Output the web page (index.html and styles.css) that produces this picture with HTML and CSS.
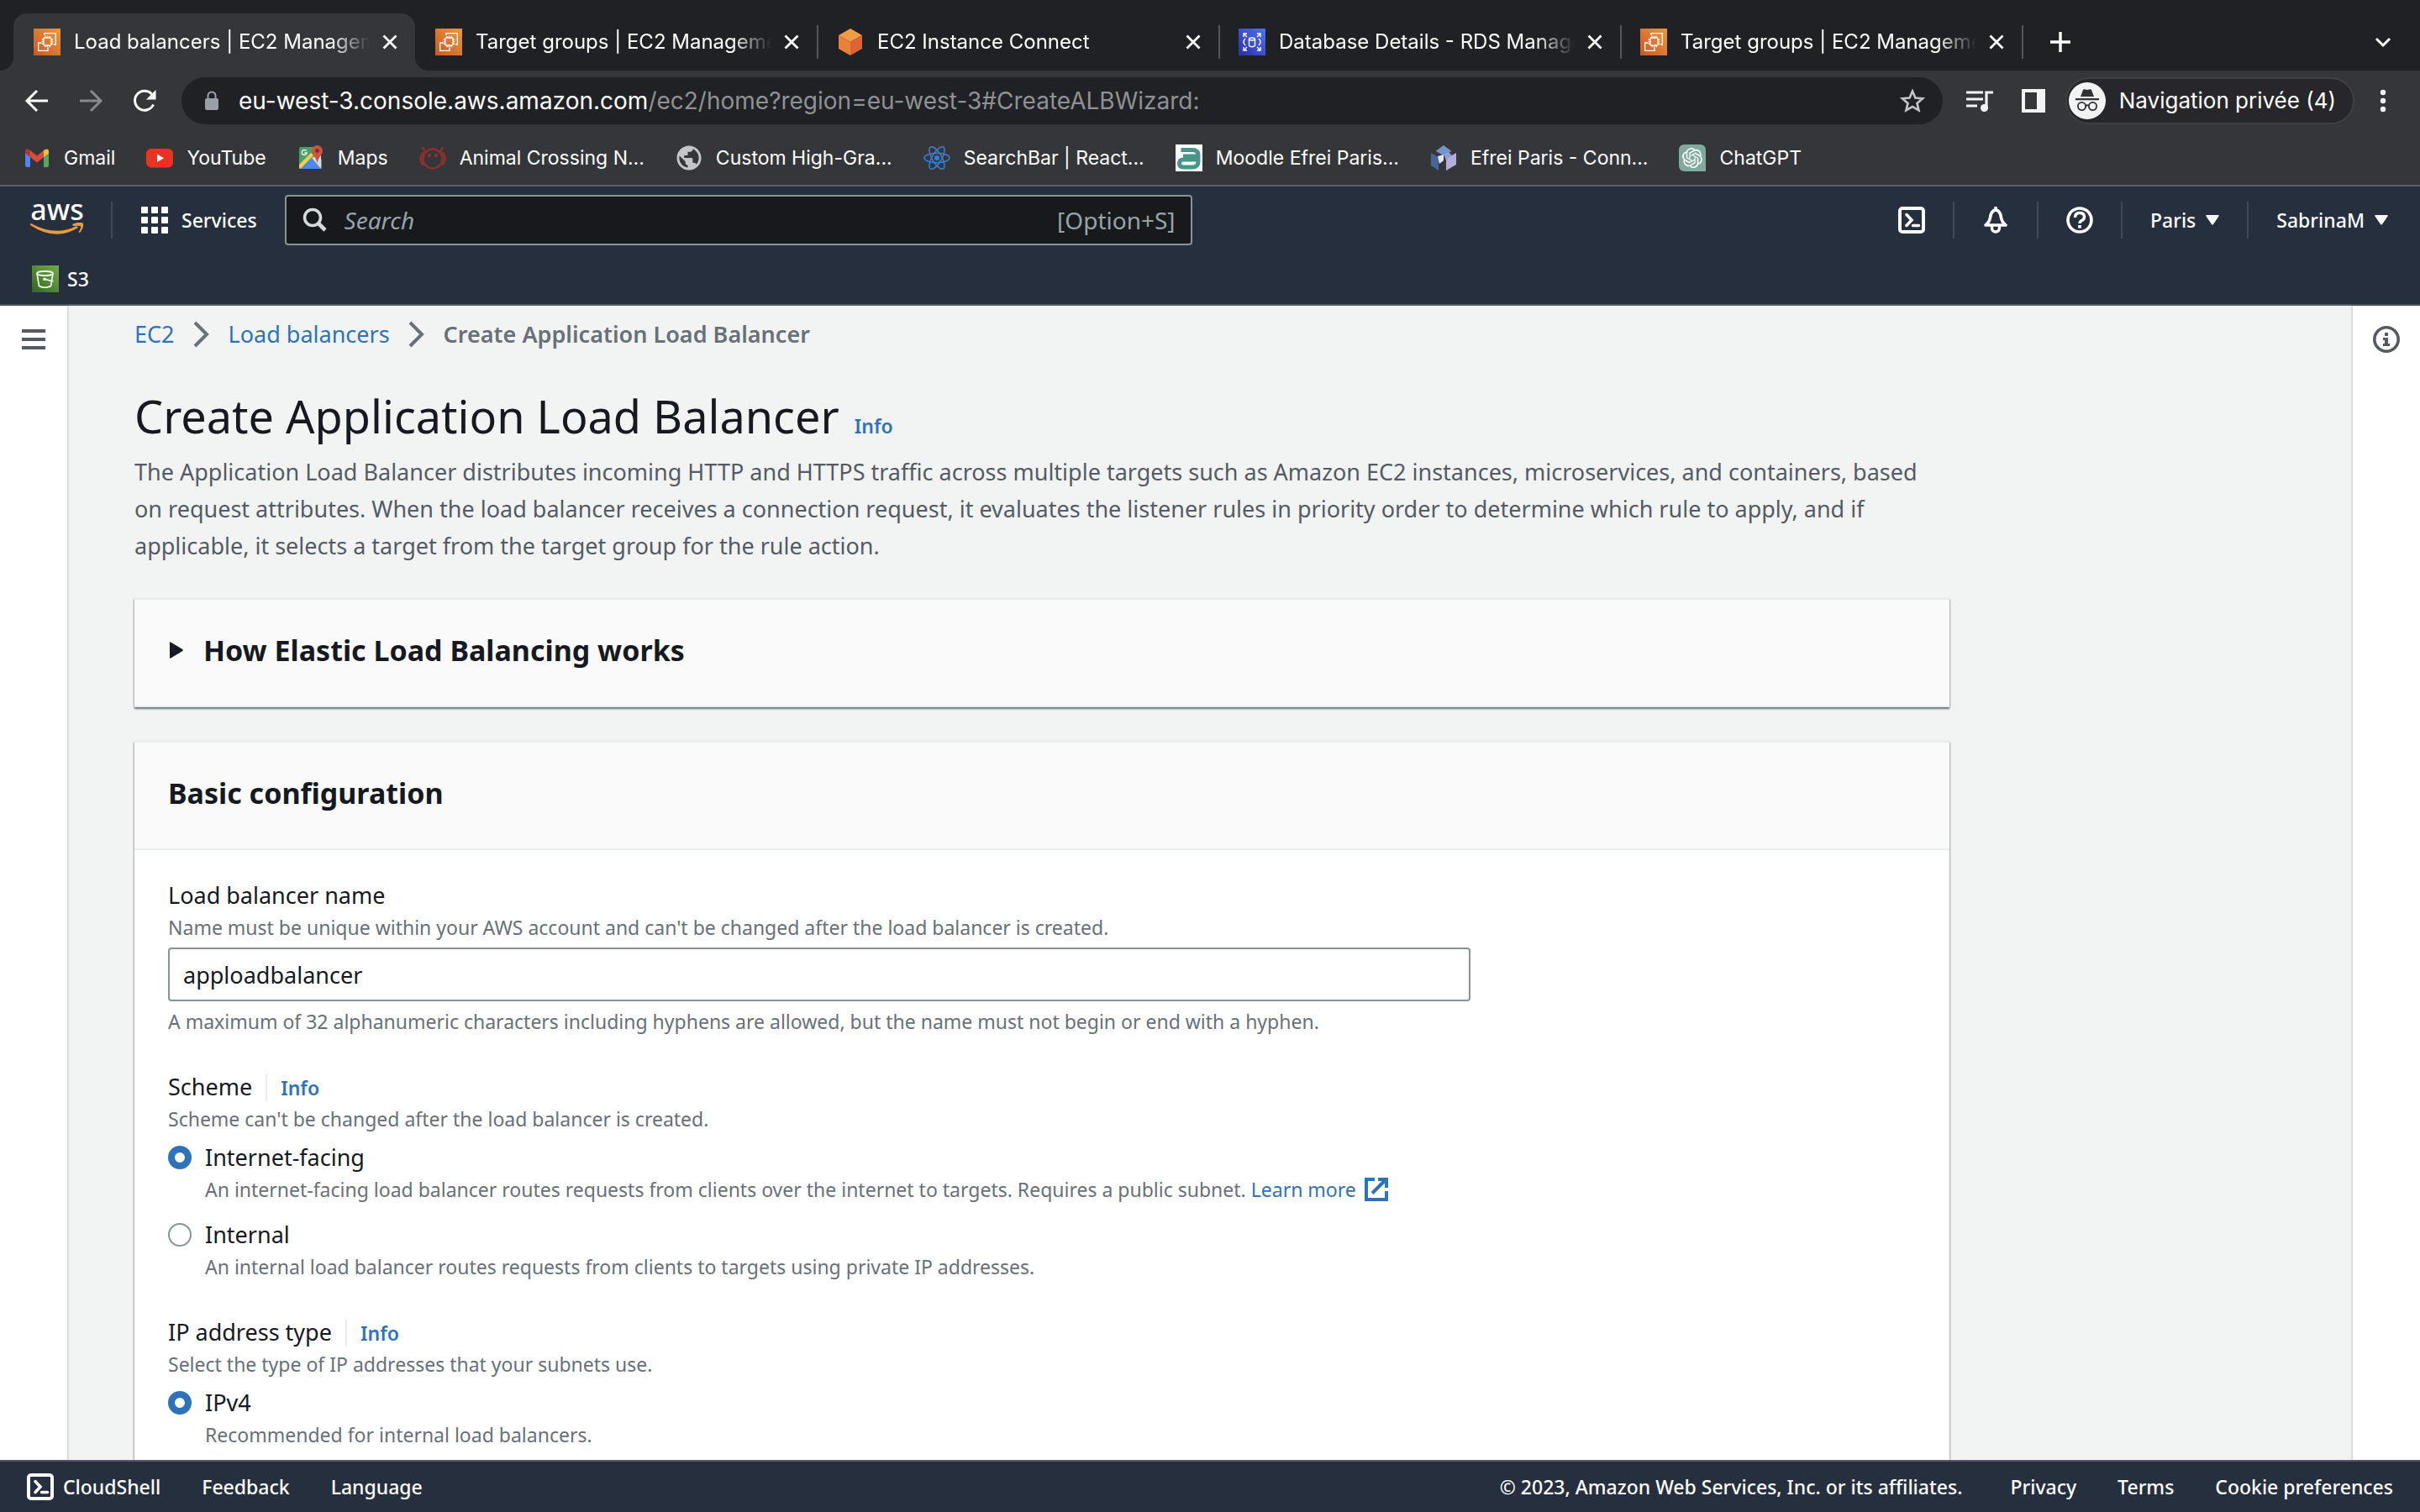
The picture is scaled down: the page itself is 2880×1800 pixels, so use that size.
FILE: index.html
```html
<!DOCTYPE html>
<html lang="en">
<head>
<meta charset="utf-8">
<title>Load balancers | EC2 Management Console</title>
<link rel="stylesheet" href="styles.css">
</head>
<body>
<svg class="sprite" aria-hidden="true">
  <defs>
    <linearGradient id="orange" x1="0" y1="1" x2="1" y2="0"><stop offset="0" stop-color="#c45a2b"/><stop offset="1" stop-color="#f0983a"/></linearGradient>
    <linearGradient id="blue" x1="0" y1="1" x2="1" y2="0"><stop offset="0" stop-color="#2b30a8"/><stop offset="1" stop-color="#4f72f3"/></linearGradient>
    <linearGradient id="green" x1="0" y1="1" x2="1" y2="0"><stop offset="0" stop-color="#32661f"/><stop offset="1" stop-color="#74ad4c"/></linearGradient>
  </defs>
  <symbol id="ec2" viewBox="0 0 32 32">
    <rect width="32" height="32" fill="url(#orange)"/>
    <g fill="none" stroke="#fff" stroke-width="1.3">
      <path d="M13 8V5.700h13.300V19H24M9.500 17H5.700v9.300H17V22.500"/>
      <rect x="12" y="11" width="9" height="9" rx="1"/>
      <path d="M14 8.800V11M16.500 8.800V11M19 8.800V11M14 20v2.200M16.500 20v2.200M19 20v2.200M9.800 13H12M9.800 15.500H12M9.800 18H12M21 13h2.200M21 15.500h2.200M21 18h2.200"/>
    </g>
  </symbol>
  <symbol id="cube" viewBox="0 0 32 32">
    <path fill="#f09c45" d="M16 0l14 8-14 8L2 8z"/><path fill="#e98138" d="M2 8l14 8v16L2 24z"/><path fill="#dc6435" d="M30 8l-14 8v16l14-8z"/>
  </symbol>
  <symbol id="rds" viewBox="0 0 32 32">
    <rect width="32" height="32" fill="url(#blue)"/>
    <g fill="none" stroke="#fff" stroke-width="1.4">
      <path d="M6 10V6h4M6 6l4 4M26 10V6h-4M26 6l-4 4M6 22v4h4M6 26l4-4M26 22v4h-4M26 26l-4-4M8 12q-4 4 0 8M24 12q4 4 0 8"/>
      <ellipse cx="16" cy="12.500" rx="3.500" ry="1.500"/><path d="M12.500 12.500v8q3.500 2.500 7 0v-8"/>
    </g>
  </symbol>
  <symbol id="close" viewBox="0 0 32 32"><path d="M8.500 8.500l15 15M23.500 8.500l-15 15" fill="none" stroke="#fff" stroke-width="2.800"/></symbol>
  <symbol id="shell" viewBox="0 0 32 32">
    <rect x="2" y="2" width="28" height="28" rx="3" fill="none" stroke="#fff" stroke-width="4"/>
    <path d="M10 9.500l6 6.500-6 6.500M17.500 22.500h7" fill="none" stroke="#fff" stroke-width="3.500" stroke-linecap="round"/>
  </symbol>
  <symbol id="caret" viewBox="0 0 16 12"><path d="M1 0h14q1.200.5.500 1.600L9 11q-1 1.200-2 0L.500 1.600Q-.200.500 1 0z" fill="#fff"/></symbol>
  <symbol id="chevron" viewBox="0 0 20 32"><path d="M2 2l14 14L2 30" fill="none" stroke="#687078" stroke-width="4"/></symbol>
</svg>

<header class="browser">
  <div class="tabs" role="tablist">
    <div class="tab active" role="tab"><svg class="icon"><use href="#ec2"/></svg><span class="tab-title">Load balancers | EC2 Management</span><button class="plain" aria-label="Close tab"><svg class="icon"><use href="#close"/></svg></button></div>
    <div class="tab" role="tab"><svg class="icon"><use href="#ec2"/></svg><span class="tab-title">Target groups | EC2 Management</span><button class="plain" aria-label="Close tab"><svg class="icon"><use href="#close"/></svg></button></div>
    <div class="tab divided" role="tab"><svg class="icon"><use href="#cube"/></svg><span class="tab-title">EC2 Instance Connect</span><button class="plain" aria-label="Close tab"><svg class="icon"><use href="#close"/></svg></button></div>
    <div class="tab divided" role="tab"><svg class="icon"><use href="#rds"/></svg><span class="tab-title">Database Details - RDS Management</span><button class="plain" aria-label="Close tab"><svg class="icon"><use href="#close"/></svg></button></div>
    <div class="tab divided" role="tab"><svg class="icon"><use href="#ec2"/></svg><span class="tab-title">Target groups | EC2 Management</span><button class="plain" aria-label="Close tab"><svg class="icon"><use href="#close"/></svg></button></div>
    <button class="plain new-tab divided" aria-label="New tab"><svg class="icon" viewBox="0 0 32 32"><path d="M16 4v24M4 16h24" fill="none" stroke="#fff" stroke-width="3.400"/></svg></button>
    <button class="plain tab-search" aria-label="Search tabs"><svg class="icon" viewBox="0 0 32 32"><path d="M8 12l8 8 8-8" fill="none" stroke="#fff" stroke-width="3"/></svg></button>
  </div>

  <div class="toolbar">
    <button class="plain" aria-label="Back"><svg class="icon" viewBox="0 0 32 32"><path d="M29 16H5M16 4L4 16l12 12" fill="none" stroke="#fff" stroke-width="3"/></svg></button>
    <button class="plain" aria-label="Forward"><svg class="icon" viewBox="0 0 32 32"><path d="M3 16h24M16 4l12 12-12 12" fill="none" stroke="#87888b" stroke-width="3"/></svg></button>
    <button class="plain" aria-label="Reload"><svg class="icon" viewBox="0 0 32 32"><path d="M26.500 20.500A11.500 11.500 0 1 1 24.500 8" fill="none" stroke="#fff" stroke-width="3"/><path d="M29.500 3v11.500H18z" fill="#fff"/></svg></button>
    <div class="omnibox">
      <svg class="icon" viewBox="0 0 32 32"><rect x="8" y="13" width="16" height="14" rx="2" fill="#9aa0a6"/><path d="M11.500 14v-4a4.500 4.500 0 0 1 9 0v4" fill="none" stroke="#9aa0a6" stroke-width="2"/></svg>
      <div class="url" role="textbox" aria-label="Address"><span class="host">eu-west-3.console.aws.amazon.com</span>/ec2/home?region=eu-west-3#CreateALBWizard:</div>
      <button class="plain" aria-label="Bookmark"><svg class="icon" viewBox="0 0 32 32"><path d="M16 4.500l3.400 8 8.600.700-6.500 5.700 2 8.500-7.500-4.500-7.500 4.500 2-8.500L4 13.200l8.600-.700z" fill="none" stroke="#c4c6c9" stroke-width="2.600"/></svg></button>
    </div>
    <div class="toolbar-end">
      <button class="plain" aria-label="Media"><svg class="icon" viewBox="0 0 32 32"><path d="M0 6h20M0 14h20M0 22h13" stroke="#f1f3f4" stroke-width="3"/><path d="M24 26V6h8" fill="none" stroke="#f1f3f4" stroke-width="3.200"/><circle cx="21.500" cy="24.500" r="4.500" fill="#f1f3f4"/></svg></button>
      <button class="plain" aria-label="Side panel"><svg class="icon" viewBox="0 0 32 32"><path fill="#f1f3f4" fill-rule="evenodd" d="M2 2h28v28H2zM6 6v20h14V6z"/></svg></button>
      <button class="plain profile"><svg class="avatar" viewBox="0 0 44 44"><circle cx="22" cy="22" r="22" fill="#f1f3f4"/><g fill="#303236"><path d="M14 17l3-8q.500-1 1.800-.700L22 9l3.200-.700Q26.500 8 27 9l3 8zM8 19h28v2.200H8z"/></g><g fill="none" stroke="#303236" stroke-width="1.800"><circle cx="15.500" cy="28.500" r="4.600"/><circle cx="28.500" cy="28.500" r="4.600"/><path d="M20 28q2-1.500 4 0"/></g></svg>Navigation privée (4)</button>
      <button class="plain" aria-label="Menu"><svg class="icon" viewBox="0 0 32 32"><g fill="#f1f3f4"><circle cx="16" cy="6" r="3.200"/><circle cx="16" cy="16" r="3.200"/><circle cx="16" cy="26" r="3.200"/></g></svg></button>
    </div>
  </div>

  <nav class="bookmarks" aria-label="Bookmarks">
    <a href="#"><svg class="icon" viewBox="0 0 32 32"><path fill="#4f86ec" d="M2 9l6 5v13H4q-2 0-2-2z"/><path fill="#59a65b" d="M30 9l-6 5v13h4q2 0 2-2z"/><path fill="#d94b3e" d="M8 7l8 6.500L24 7v8l-8 6.500L8 15z"/><path fill="#b3392f" d="M2 8q0-2.500 2.500-2.500Q6 5.500 8 7v8l-6-4.500z"/><path fill="#f2bd42" d="M30 8q0-2.500-2.500-2.500Q26 5.500 24 7v8l6-4.500z"/></svg>Gmail</a>
    <a href="#"><svg class="icon" viewBox="0 0 32 32"><rect y="5" width="32" height="22.500" rx="6" fill="#ea3323"/><path fill="#fff" d="M13 11.500l8 4.700-8 4.700z"/></svg>YouTube</a>
    <a href="#"><svg class="icon" viewBox="0 0 32 32"><path fill="#4ca067" d="M4 3h16l9 15v11H4q-2 0-2-2V5q0-2 2-2z"/><path fill="#d8d9dc" d="M17 16l11-5v15q0 3-3 3z"/><path fill="#4f86ec" d="M4 29l13-13 11 13z"/><path fill="#f5cf4c" d="M2 24L16 10l3 3L3.500 29Q2 29 2 27z"/><path fill="#d15241" d="M23.500 1a6.500 6.500 0 0 1 6.500 6.500c0 5-5.500 7-6.500 15-1-8-6.500-10-6.500-15A6.500 6.500 0 0 1 23.500 1z"/><circle cx="23.500" cy="7.500" r="2.400" fill="#7c2c21"/><path d="M10.500 7.500a3 3 0 1 0 .700 2.500H8.500" fill="none" stroke="#fff" stroke-width="1.300"/></svg>Maps</a>
    <a href="#"><svg class="icon" viewBox="0 0 32 32"><g fill="none" stroke="#8f2f2d" stroke-width="2.400"><circle cx="16" cy="17" r="11.500"/><path d="M5 9.500q-7 7 0 15M27 9.500q7 7 0 15M7 9L4 3M25 9l3-6"/></g><circle cx="12" cy="13" r="2.300" fill="#8f2f2d"/><circle cx="20" cy="13" r="2.300" fill="#8f2f2d"/></svg>Animal Crossing N...</a>
    <a href="#"><svg class="icon" viewBox="1 1 22 22"><path fill="#c3c5ca" d="M12 2C6.480 2 2 6.480 2 12s4.480 10 10 10 10-4.480 10-10S17.520 2 12 2zm-1 17.930c-3.950-.490-7-3.850-7-7.930 0-.620.080-1.210.210-1.790L9 15v1c0 1.100.900 2 2 2v1.930zm6.900-2.540c-.260-.810-1-1.390-1.900-1.390h-1v-3c0-.550-.450-1-1-1H8v-2h2c.550 0 1-.450 1-1V7h2c1.100 0 2-.900 2-2v-.410c2.930 1.190 5 4.060 5 7.410 0 2.080-.800 3.970-2.100 5.390z"/></svg>Custom High-Gra...</a>
    <a href="#"><svg class="icon" viewBox="0 0 32 32"><g fill="none" stroke="#3b7fd0" stroke-width="1.500"><ellipse cx="16" cy="16" rx="15" ry="5.700"/><ellipse cx="16" cy="16" rx="15" ry="5.700" transform="rotate(60 16 16)"/><ellipse cx="16" cy="16" rx="15" ry="5.700" transform="rotate(120 16 16)"/></g><circle cx="16" cy="16" r="3" fill="#3b7fd0"/></svg>SearchBar | React...</a>
    <a href="#"><svg class="icon" viewBox="0 0 32 32"><path fill="#fff" d="M0 0h32v32H0z"/><path d="M6.500 6.500H20q7 0 7 6V20q0 7-7 7H9.500q-5 0-5-4.500t5-4.500H22v-4H9" fill="none" stroke="#46968a" stroke-width="5"/></svg>Moodle Efrei Paris...</a>
    <a href="#"><svg class="icon" viewBox="0 0 32 32"><path fill="#7395cf" d="M16 1l9.500 7L16 13 6.500 8z"/><path fill="#4a6399" d="M1 10l9 5v16L1 25z"/><path fill="#dbe7f6" d="M9 14l7-2v7l-5 4z"/><path fill="#b3aed8" d="M31 10l-12 7v14l12-7z"/><path fill="#8f9fd0" d="M16 12l6-3 4 4-7 6z"/></svg>Efrei Paris - Conn...</a>
    <a href="#"><svg class="icon" viewBox="0 0 32 32"><path fill="#7faa9d" d="M7 0h18q7 0 7 7v25H7q-7 0-7-7V7q0-7 7-7z"/><path fill="#fff" transform="translate(4 4)" d="M22.282 9.821a5.985 5.985 0 0 0-.516-4.911 6.046 6.046 0 0 0-6.510-2.900A6.065 6.065 0 0 0 4.981 4.182a5.985 5.985 0 0 0-3.998 2.900 6.046 6.046 0 0 0 .743 7.097 5.980 5.980 0 0 0 .511 4.911 6.051 6.051 0 0 0 6.515 2.900A5.985 5.985 0 0 0 13.260 24a6.056 6.056 0 0 0 5.772-4.206 5.989 5.989 0 0 0 3.998-2.900 6.056 6.056 0 0 0-.748-7.073zm-9.022 12.608a4.476 4.476 0 0 1-2.876-1.041l.142-.080 4.778-2.758a.795.795 0 0 0 .393-.681v-6.737l2.020 1.169a.071.071 0 0 1 .038.052v5.583a4.504 4.504 0 0 1-4.495 4.494zm-9.661-4.125a4.471 4.471 0 0 1-.535-3.014l.142.085 4.783 2.758a.771.771 0 0 0 .781 0l5.843-3.369v2.332a.080.080 0 0 1-.033.062L9.740 19.950a4.499 4.499 0 0 1-6.141-1.646zM2.341 7.896a4.485 4.485 0 0 1 2.366-1.973V11.600a.766.766 0 0 0 .388.677l5.814 3.354-2.020 1.169a.076.076 0 0 1-.071 0l-4.830-2.787A4.504 4.504 0 0 1 2.341 7.872zm16.596 3.856L13.104 8.364 15.119 7.200a.076.076 0 0 1 .071 0l4.830 2.791a4.494 4.494 0 0 1-.677 8.104v-5.677a.790.790 0 0 0-.407-.667zm2.011-3.023l-.142-.085-4.774-2.782a.776.776 0 0 0-.785 0L9.409 9.230V6.897a.066.066 0 0 1 .028-.062l4.830-2.787a4.499 4.499 0 0 1 6.680 4.660zM8.307 12.863l-2.020-1.164a.080.080 0 0 1-.038-.057V6.074a4.499 4.499 0 0 1 7.376-3.454l-.142.081L8.704 5.459a.795.795 0 0 0-.393.681zm1.098-2.365l2.602-1.500 2.607 1.500v2.999l-2.597 1.500-2.607-1.500z"/></svg>ChatGPT</a>
  </nav>
</header>

<header class="console">
  <div class="console-row">
    <a class="logo" href="#"><span>aws</span><svg viewBox="0 0 64 16" aria-hidden="true"><path fill="#eb9b3d" d="M1 1q29 16 54 3l2 2Q30 23 0 3q-.500-2 1-2z"/><path fill="#eb9b3d" d="M50 2q10-4 13-1 1 5-4 11-1.500 0-1-1.500Q61 5 60 4.300 57 3.300 51 4z"/></svg></a>
    <i class="rule"></i>
    <button class="plain services"><svg class="icon" viewBox="0 0 32 32"><g fill="#fff"><rect width="8" height="8" rx="1"/><rect x="12" width="8" height="8" rx="1"/><rect x="24" width="8" height="8" rx="1"/><rect y="12" width="8" height="8" rx="1"/><rect x="12" y="12" width="8" height="8" rx="1"/><rect x="24" y="12" width="8" height="8" rx="1"/><rect y="24" width="8" height="8" rx="1"/><rect x="12" y="24" width="8" height="8" rx="1"/><rect x="24" y="24" width="8" height="8" rx="1"/></g></svg>Services</button>
    <label class="search">
      <svg class="icon" viewBox="0 0 32 32"><circle cx="13" cy="13" r="9.500" fill="none" stroke="#d5dbdb" stroke-width="3.600"/><path d="M19.500 19.500l8.500 8.500" stroke="#d5dbdb" stroke-width="4.600"/></svg>
      <input type="search" placeholder="Search" aria-label="Search">
      <span>[Option+S]</span>
    </label>
    <div class="console-end">
      <button class="plain" aria-label="CloudShell"><svg class="icon"><use href="#shell"/></svg></button>
      <i class="rule"></i>
      <button class="plain" aria-label="Notifications"><svg class="icon" viewBox="0 0 32 32"><path d="M16 3.500c4.500 1.500 6 5 6.500 9.500.500 4 2 6 5.500 9H4c3.500-3 5-5 5.500-9 .500-4.500 2-8 6.500-9.500z" fill="none" stroke="#fff" stroke-width="3.600" stroke-linejoin="round"/><path d="M16 0v4M11.500 23v2.500a4.500 4.500 0 0 0 9 0V23" fill="none" stroke="#fff" stroke-width="3.400"/></svg></button>
      <i class="rule"></i>
      <button class="plain" aria-label="Help"><svg class="icon" viewBox="0 0 32 32"><circle cx="16" cy="16" r="14" fill="none" stroke="#fff" stroke-width="3.600"/><path d="M10.500 13q0-5.500 5.500-5.500t5.500 4.700q0 2.800-3 4.300-2.500 1.300-2.500 3.500" fill="none" stroke="#fff" stroke-width="3.400"/><rect x="14.200" y="22" width="3.600" height="3.600" fill="#fff"/></svg></button>
      <i class="rule"></i>
      <button class="plain menu">Paris<svg class="caret"><use href="#caret"/></svg></button>
      <i class="rule"></i>
      <button class="plain menu">SabrinaM<svg class="caret"><use href="#caret"/></svg></button>
    </div>
  </div>
  <div class="favorites">
    <a href="#"><svg class="icon" viewBox="0 0 32 32"><rect width="32" height="32" fill="url(#green)"/><g fill="none" stroke="#fff" stroke-width="1.600"><ellipse cx="15.500" cy="9.500" rx="9.500" ry="2.600"/><path d="M6 9.500l2.500 15q7 3.500 14 0l2.500-15M15.500 16.500l10 2.600"/></g><circle cx="15" cy="16.200" r="1.800" fill="#fff"/></svg>S3</a>
  </div>
</header>

<div class="workspace">
  <aside class="rail rail-left"><button class="plain" aria-label="Open navigation"><svg class="icon" viewBox="0 0 32 32"><path d="M2 6h28M2 16h28M2 26h28" stroke="#545b64" stroke-width="4"/></svg></button></aside>

  <main>
    <div class="content">
      <nav class="crumbs" aria-label="Breadcrumb">
        <a href="#">EC2</a><svg class="chevron"><use href="#chevron"/></svg><a href="#">Load balancers</a><svg class="chevron"><use href="#chevron"/></svg><span>Create Application Load Balancer</span>
      </nav>
      <div class="title"><h1>Create Application Load Balancer</h1><a class="info" href="#">Info</a></div>
      <p class="intro">The Application Load Balancer distributes incoming HTTP and HTTPS traffic across multiple targets such as Amazon EC2 instances, microservices, and containers, based on request attributes. When the load balancer receives a connection request, it evaluates the listener rules in priority order to determine which rule to apply, and if applicable, it selects a target from the target group for the rule action.</p>

      <section class="card">
        <h2><button class="plain expander"><svg viewBox="0 0 16 20" aria-hidden="true"><path d="M0 1q0-1 1.200-.500L15.300 9q.900 1 0 2L1.200 19.500Q0 20 0 19z" fill="#16191f"/></svg>How Elastic Load Balancing works</button></h2>
      </section>

      <section class="card">
        <h2>Basic configuration</h2>
        <form class="fields">
          <div class="field">
            <label class="label" for="lb-name">Load balancer name</label>
            <p class="hint">Name must be unique within your AWS account and can't be changed after the load balancer is created.</p>
            <input class="text" id="lb-name" type="text" value="apploadbalancer">
            <p class="hint">A maximum of 32 alphanumeric characters including hyphens are allowed, but the name must not begin or end with a hyphen.</p>
          </div>
          <div class="field" role="radiogroup" aria-labelledby="scheme">
            <div class="label-row"><span class="label" id="scheme">Scheme</span><a class="info" href="#">Info</a></div>
            <p class="hint">Scheme can't be changed after the load balancer is created.</p>
            <div class="options">
              <div class="option"><input type="radio" name="scheme" id="internet" checked><label class="label" for="internet">Internet-facing</label>
                <p class="hint">An internet-facing load balancer routes requests from clients over the internet to targets. Requires a public subnet. <a href="#">Learn more<svg class="external" viewBox="0 0 28 28" aria-hidden="true"><path d="M12 2H2v24h24V16" fill="none" stroke="#2e73b8" stroke-width="4"/><path d="M9 18.500L23.500 4" stroke="#2e73b8" stroke-width="4"/><path d="M16 0h12v12h-4V4h-8z" fill="#2e73b8"/></svg></a></p></div>
              <div class="option"><input type="radio" name="scheme" id="internal"><label class="label" for="internal">Internal</label>
                <p class="hint">An internal load balancer routes requests from clients to targets using private IP addresses.</p></div>
            </div>
          </div>
          <div class="field" role="radiogroup" aria-labelledby="ip-type">
            <div class="label-row"><span class="label" id="ip-type">IP address type</span><a class="info" href="#">Info</a></div>
            <p class="hint">Select the type of IP addresses that your subnets use.</p>
            <div class="options">
              <div class="option"><input type="radio" name="ip" id="ipv4" checked><label class="label" for="ipv4">IPv4</label>
                <p class="hint">Recommended for internal load balancers.</p></div>
            </div>
          </div>
        </form>
      </section>
    </div>
  </main>

  <aside class="rail rail-right"><button class="plain" aria-label="Open help panel"><svg class="icon" viewBox="0 0 32 32"><circle cx="16" cy="16" r="14.200" fill="none" stroke="#545b64" stroke-width="3.600"/><path fill="#545b64" d="M14 8h4v4h-4zM12 14h6v7h2v3h-8v-3h2v-4h-2z"/></svg></button></aside>
</div>

<footer>
  <button class="plain shell"><svg class="icon"><use href="#shell"/></svg>CloudShell</button>
  <a href="#">Feedback</a>
  <button class="plain">Language</button>
  <div class="legal"><span>© 2023, Amazon Web Services, Inc. or its affiliates.</span><a href="#">Privacy</a><a href="#">Terms</a><a href="#">Cookie preferences</a></div>
</footer>
</body>
</html>
```
FILE: styles.css
```css
* { box-sizing: border-box; }

body {
  margin: 0;
  height: 100vh;
  display: flex;
  flex-direction: column;
  overflow: hidden;
  font: 27px/44px "Noto Sans", sans-serif;
  color: #16191f;
  background: #f2f4f3;
}

h1, h2, p { margin: 0; }
a { color: #2e73b8; text-decoration: none; }
svg { display: block; flex: none; }
.sprite { position: absolute; width: 0; height: 0; }
.icon { width: 32px; height: 32px; }

.plain {
  display: flex;
  align-items: center;
  flex: none;
  padding: 0;
  border: 0;
  background: none;
  color: inherit;
  font: inherit;
}

/* Browser frame */
.browser {
  flex: none;
  background: #35363a;
  border-bottom: 2px solid #5f6064;
  color: #fff;
  font: 24px/32px Inter, sans-serif;
}

.tabs {
  display: flex;
  height: 84px;
  padding: 16px 28px 0 16px;
  background: #202124;
}

.tab {
  position: relative;
  flex: 0 1 478px;
  min-width: 0;
  display: flex;
  align-items: center;
  padding: 0 14px 0 24px;
}

.tab-title {
  flex: 1;
  min-width: 0;
  margin: 0 8px 0 16px;
  overflow: hidden;
  white-space: nowrap;
  mask-image: linear-gradient(to left, transparent, #000 48px);
}

.active { background: #35363a; border-radius: 16px 16px 0 0; }
.active::before, .active::after {
  content: "";
  position: absolute;
  bottom: 0;
  width: 16px;
  height: 16px;
}
.active::before { right: 100%; background: radial-gradient(circle at 0 0, transparent 16px, #35363a 16px); }
.active::after { left: 100%; background: radial-gradient(circle at 100% 0, transparent 16px, #35363a 16px); }
.divided { background: linear-gradient(#55565a, #55565a) left center / 2px 40px no-repeat; }
.new-tab { padding: 0 30px; }
.tab-search { margin-left: auto; }

.toolbar {
  display: flex;
  align-items: center;
  gap: 32px;
  padding: 8px 28px 0;
}

.omnibox {
  flex: 1;
  min-width: 0;
  display: flex;
  align-items: center;
  height: 56px;
  margin-left: -4px;
  padding: 0 20px;
  border-radius: 28px;
  background: #202124;
}
.url { flex: 1; margin-left: 16px; font-size: 28px; color: #8f9194; white-space: nowrap; overflow: hidden; }
.host { color: #fff; }

.toolbar-end { display: flex; align-items: center; gap: 26px; margin-left: -4px; }
.toolbar-end > :nth-child(2) { margin-left: 6px; }
.profile {
  height: 56px;
  gap: 16px;
  padding: 0 20px 0 2px;
  margin-left: -4px;
  border: 2px solid #3f4044;
  border-radius: 28px;
  background: #27272b;
  font-size: 26px;
}
.avatar { width: 44px; height: 44px; }
.toolbar-end > :last-child { margin: 0 0 0 -8px; }

.bookmarks {
  display: flex;
  gap: 37px;
  padding: 24px 28px 16px;
  font-size: 23px;
}
.bookmarks a { display: flex; gap: 16px; color: #fff; white-space: nowrap; }

/* Console header */
.console {
  flex: none;
  padding: 0 38px 0 36px;
  background: #252f3e;
  border-bottom: 2px solid #545b64;
  color: #fff;
  font-size: 23px;
  font-weight: 500;
  line-height: 32px;
}
.console-row { display: flex; align-items: center; height: 80px; }
.logo { width: 64px; text-align: center; color: #fff; font-size: 34px; line-height: 20px; }
.logo span { display: block; }
.logo svg { width: 64px; height: 16px; margin: 6px 0 4px; }
.rule { flex: none; width: 2px; height: 44px; background: #414b57; }
.logo + .rule { margin: 0 34px 0 32px; }
.services { gap: 16px; }

.search {
  flex: 0 1 1080px;
  min-width: 0;
  display: flex;
  align-items: center;
  gap: 19px;
  height: 60px;
  margin-left: 33px;
  padding: 0 18px;
  border: 2px solid #879596;
  border-radius: 4px;
  background: #18191d;
  color: #95a5a6;
  font-size: 28px;
  font-weight: 400;
}
.search input { flex: 1; min-width: 0; padding: 0; border: 0; background: none; font: inherit; color: #fff; }
.search input::placeholder { color: #95a5a6; font-style: italic; opacity: 1; }

.console-end { display: flex; align-items: center; gap: 33px; margin-left: auto; }
.menu { gap: 12px; }
.caret { width: 16px; height: 12px; }
.favorites { display: flex; align-items: center; height: 60px; padding-left: 2px; }
.favorites a { display: flex; gap: 10px; color: #fff; }

/* Workspace */
.workspace { flex: 1; min-height: 0; display: flex; }
.rail { z-index: 1; flex: none; width: 80px; display: flex; justify-content: center; align-items: flex-start; padding-top: 24px; background: #fff; box-shadow: 0 0 3px rgba(0, 28, 36, .4); }
main { flex: 1; min-width: 0; padding: 12px 80px 0; overflow: hidden; }
.content { max-width: 2160px; }

.crumbs { display: flex; align-items: center; gap: 22px; color: #687078; }
.crumbs span { font-weight: 600; }
.chevron { width: 20px; height: 32px; }

.title { display: flex; align-items: baseline; gap: 18px; margin-top: 43px; }
h1 { font-size: 54px; line-height: 64px; font-weight: 400; }
.info { font-size: 23px; font-weight: 600; }
.intro { max-width: 2140px; margin: 11px 0 40px; color: #545b64; }

.card {
  margin-bottom: 40px;
  border-top: 2px solid #eaeded;
  background: #fff;
  box-shadow: 0 2px 2px rgba(0, 28, 36, .5), 1px 1px 2px rgba(0, 28, 36, .15), -1px 1px 2px rgba(0, 28, 36, .15);
}
h2 {
  padding: 38px 40px 44px;
  border-bottom: 2px solid #eaeded;
  background: #fafafa;
  font-size: 34px;
  line-height: 44px;
}
.expander { gap: 24px; padding-left: 2px; font-weight: 700; }
.expander svg { width: 16px; height: 20px; }

.fields { display: flex; flex-direction: column; gap: 40px; padding: 32px 40px 80px; }
.label { display: block; }
.hint { font-size: 23px; line-height: 32px; color: #687078; }
.text {
  display: block;
  width: 75%;
  max-width: 1550px;
  height: 64px;
  margin: 8px 0;
  padding: 0 16px;
  border: 2px solid #879596;
  border-radius: 4px;
  font: inherit;
  color: inherit;
}

.label-row { display: flex; align-items: baseline; }
.label-row .info { margin-left: 16px; padding-left: 16px; border-left: 2px solid #eaeded; line-height: 32px; }
.options { display: grid; gap: 16px; margin-top: 8px; }
.option { display: grid; grid-template-columns: 28px 1fr; column-gap: 16px; align-items: center; }
.option .hint { grid-column: 2; }
.option .hint a { display: inline-flex; align-items: center; gap: 10px; }
.external { width: 28px; height: 28px; }
.option input {
  appearance: none;
  width: 28px;
  height: 28px;
  margin: 0;
  border: 2px solid #879596;
  border-radius: 50%;
  background: #fff;
}
.option input:checked { border: 8px solid #2e73b8; }

/* Footer */
footer {
  flex: none;
  display: flex;
  align-items: center;
  gap: 49px;
  height: 62px;
  padding: 0 32px;
  border-top: 2px solid #545b64;
  background: #252f3e;
  color: #fff;
  font-size: 23px;
  font-weight: 500;
  line-height: 32px;
  white-space: nowrap;
}
footer a { color: #fff; }
.shell { gap: 11px; }
.legal { display: flex; gap: 49px; margin-left: auto; }
.legal span { margin-right: 8px; }
```
